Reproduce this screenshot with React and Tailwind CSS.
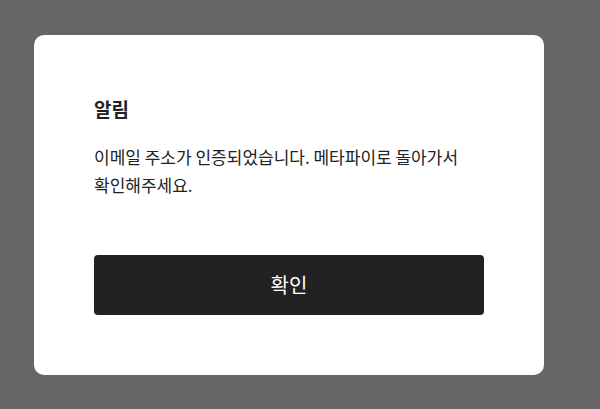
import React from "react";

function AlertModal({ title, message, onConfirm }) {
  return (
    <div className="w-[510px] rounded-[10px] bg-white px-[60px] py-[60px]">
      <h2 className="text-[19px] font-bold leading-[28px] text-[#222]">{title}</h2>
      <p className="mt-5 break-keep text-[17px] leading-[28px] text-[#222]">{message}</p>
      <button
        onClick={onConfirm}
        className="mt-14 flex h-[60px] w-full items-center justify-center rounded-[4px] bg-[#222] text-[20px] text-white"
      >
        확인
      </button>
    </div>
  );
}

export default function App() {
  return (
    <div
      className="h-[409px] w-[600px] bg-[#666666] pl-[34px] pt-[35px]"
      style={{ fontFamily: '"Noto Sans CJK KR", "Noto Sans", sans-serif' }}
    >
      <AlertModal
        title="알림"
        message="이메일 주소가 인증되었습니다. 메타파이로 돌아가서 확인해주세요."
        onConfirm={() => {}}
      />
    </div>
  );
}
